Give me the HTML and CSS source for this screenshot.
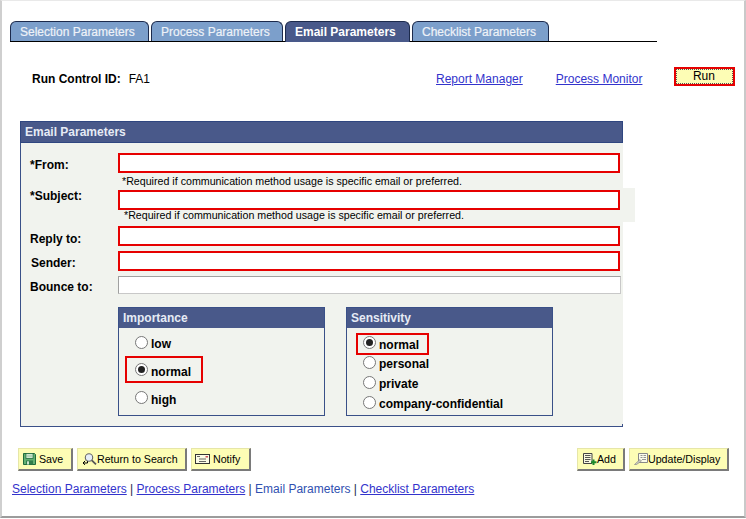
FILE: index.html
```html
<!DOCTYPE html>
<html lang="en">
<head>
<meta charset="utf-8">
<title>Email Parameters</title>
<link rel="stylesheet" href="styles.css">
</head>
<body>
<div class="frame">
  <nav class="tabs">
    <a class="tab tab-1">Selection Parameters</a>
    <a class="tab tab-2">Process Parameters</a>
    <a class="tab tab-3 active">Email Parameters</a>
    <a class="tab tab-4">Checklist Parameters</a>
  </nav>
  <div class="runbar">
    <b class="rc-label">Run Control ID:</b>
    <span class="rc-value">FA1</span>
    <a class="link rm">Report Manager</a>
    <a class="link pm">Process Monitor</a>
    <span class="run-hl"><span class="run">Run</span></span>
  </div>
  <section class="panel">
    <h2 class="panel-head">Email Parameters</h2>
    <div class="panel-body">
      <div class="row row-from"><label class="lab">*From:</label><span class="field hl"></span></div>
      <p class="note">*Required if communication method usage is specific email or preferred.</p>
      <div class="band">
        <div class="row row-subject"><label class="lab">*Subject:</label><span class="field hl"></span></div>
        <p class="note note2">*Required if communication method usage is specific email or preferred.</p>
      </div>
      <div class="row row-reply"><label class="lab">Reply to:</label><span class="field hl"></span></div>
      <div class="row row-sender"><label class="lab">Sender:</label><span class="field hl"></span></div>
      <div class="row row-bounce"><label class="lab">Bounce to:</label><span class="field plain"></span></div>
      <div class="groups">
        <div class="group">
          <h3 class="group-head">Importance</h3>
          <div class="opts opts-imp">
            <div class="opt opt-low"><i class="radio"></i>low</div>
            <div class="opt hlbox"><i class="radio on"></i>normal</div>
            <div class="opt opt-high"><i class="radio"></i>high</div>
          </div>
        </div>
        <div class="group">
          <h3 class="group-head">Sensitivity</h3>
          <div class="opts opts-sen">
            <div class="opt hlbox"><i class="radio on"></i>normal</div>
            <div class="opt"><i class="radio"></i>personal</div>
            <div class="opt"><i class="radio"></i>private</div>
            <div class="opt"><i class="radio"></i>company-confidential</div>
          </div>
        </div>
      </div>
    </div>
  </section>
  <div class="toolbar">
    <span class="btn b-save"><svg class="ico ico-s" viewBox="0 0 13 12"><path d="M.5.500h11l1 1v10H.5z" fill="#62b072" stroke="#1f6a3c"/><rect x="3" y=".5" width="7" height="5" fill="#e4f2e2" stroke="#1f6a3c" stroke-width=".8"/><path d="M4 2.200h5M4 3.800h5" stroke="#7fb98c" stroke-width=".7"/><rect x="3" y="7.500" width="7" height="4" fill="#2f7d4a"/><rect x="4" y="8.300" width="2" height="3.200" fill="#cfe6cf"/></svg><span>Save</span></span>
    <span class="btn b-ret"><svg class="ico ico-r" viewBox="0 0 15 12"><circle cx="7" cy="4.500" r="3.700" fill="#e6eef8" stroke="#666" stroke-width="1.100"/><path d="M9.800 7.300l4.200 4" stroke="#555" stroke-width="1.800"/><path d="M5.500 8.200v1.800H1.200" fill="none" stroke="#000"/><path d="M3.200 7.800L1 10l2.200 2" fill="none" stroke="#000"/></svg><span>Return to Search</span></span>
    <span class="btn b-not"><svg class="ico ico-n" viewBox="0 0 15 10"><rect x=".5" y=".5" width="14" height="9" fill="#fbfbe6" stroke="#333"/><path d="M2 2.500h3M4 5h7M4 7.500h7" stroke="#555" stroke-width=".9"/><rect x="10.500" y="2" width="2.500" height="1.500" fill="#c9505a"/></svg><span>Notify</span></span>
    <span class="spacer"></span>
    <span class="btn b-add"><svg class="ico ico-a" viewBox="0 0 14 12"><path d="M.5.500h8.500v10H.5z" fill="#f8f8df" stroke="#444"/><path d="M2 2.500h5.500M2 4.500h5.500M2 6.500h5.500M2 8.500h4" stroke="#444" stroke-width=".9"/><path d="M10.500 6.500v5.500M8 9.200h5.500" stroke="#1d8a2c" stroke-width="2"/></svg><span>Add</span></span>
    <span class="btn b-upd"><svg class="ico ico-u" viewBox="0 0 14 12"><path d="M4.500.500h9v9h-9z" fill="#fbfbea" stroke="#888"/><path d="M6.500 2.500h2M9.500 2.500h2.500M6.500 4.500h2M9.500 4.500h2.500M8 6.500h4" stroke="#888" stroke-width=".9"/><path d="M.5 11.500l5.500-5 1.500 1.500-5 3.500z" fill="#d0d0c4" stroke="#888" stroke-width=".7"/></svg><span>Update/Display</span></span>
  </div>
  <div class="footer-links">
    <a class="link">Selection Parameters</a> <span class="sep">|</span>
    <a class="link">Process Parameters</a> <span class="sep">|</span>
    <span class="cur">Email Parameters</span> <span class="sep">|</span>
    <a class="link">Checklist Parameters</a>
  </div>
</div>
</body>
</html>
```
FILE: styles.css
```css
* { box-sizing: border-box; }
html, body { margin: 0; padding: 0; background: #fff; }
body { width: 746px; height: 519px; overflow: hidden; font-family: "Liberation Sans", Arial, sans-serif; font-size: 12px; color: #000; }
h2, h3, p { margin: 0; }
.frame { width: 746px; height: 518px; border-style: solid; border-width: 1px 2px 2px 2px; border-color: #e9e9e9 #c9c9c9 #9c9c9c #cfcfcf; padding-top: 20px; }

.tabs { display: flex; height: 21px; width: 647px; margin-left: 8px; border-bottom: 1px solid #000; gap: 2px; }
.tab { height: 20px; padding: 3px 0 0 9px; background: #7c9fcb; color: #eef2f8; font-size: 12px; line-height: 15px; border: 1px solid #1c2a4c; border-bottom: 0; border-radius: 6px 6px 0 0; -webkit-text-stroke: 0.2px #eef2f8; }
.tab-1 { width: 139px; }
.tab-2 { width: 132px; }
.tab-3 { width: 125px; }
.tab-4 { width: 137px; }
.tab.active { background: #49598a; color: #fff; font-weight: bold; height: 21px; -webkit-text-stroke: 0; }

.runbar { display: flex; align-items: center; height: 79px; padding-left: 30px; }
.rc-label { position: relative; top: -3px; }
.rc-value { margin-left: 8px; position: relative; top: -3px; }
.link { color: #3333cc; text-decoration: underline; }
.rm { margin-left: 286px; position: relative; top: -3px; }
.pm { margin-left: 33px; position: relative; top: -3px; }
.run-hl { margin-left: 32px; width: 61px; height: 19px; border: 2px solid #e60000; position: relative; top: -5px; }
.run { display: block; height: 15px; padding-right: 2px; background: #fdfdb5; border: 1px dotted #555; text-align: center; font-size: 12px; line-height: 13px; }

.panel { width: 603px; margin-left: 18px; height: 307px; }
.panel-head { height: 22px; background: #49598a; color: #e6ebf5; font-size: 12px; font-weight: bold; line-height: 20px; padding-left: 4px; border: 1px solid #2f4680; }
.panel-body { position: relative; height: 284px; background: #f1f3ee; border-left: 1px solid #3a5088; border-bottom: 1px solid #3a5088; padding-top: 10px; }
.panel-body::after { content: ""; position: absolute; right: 0; bottom: 0; width: 1px; height: 2px; background: #3a5088; }

.row { display: flex; align-items: flex-start; }
.lab { display: block; width: 97px; padding-left: 9px; font-weight: bold; font-size: 12px; line-height: 15px; }
.field { display: block; width: 502px; height: 20px; background: #fff; }
.hl { border: 2px solid #e60000; }
.plain { width: 503px; height: 18px; border: 1px solid #a5a5a5; border-color: #a0a0a0 #c8c8c8 #c8c8c8 #a0a0a0; }
.note { font-size: 10.67px; line-height: 13px; padding-left: 101px; height: 15px; padding-top: 2px; }
.note2 { padding-left: 103px; padding-top: 0; height: 14px; margin-top: -2px; }
.row-from .lab { padding-top: 5px; }
.band { width: 614px; height: 34px; background: #f1f3ee; padding-top: 2px; }
.row-subject { height: 21px; }
.row-subject .lab { margin-top: -1px; }
.row-reply { margin-top: 4px; height: 20px; }
.row-reply .lab { padding-top: 6px; }
.row-sender { margin-top: 5px; height: 20px; }
.row-sender .lab { padding-top: 5px; padding-left: 10px; }
.row-bounce { margin-top: 5px; height: 18px; }
.row-bounce .lab { padding-top: 4px; }

.groups { display: flex; gap: 21px; margin: 13px 0 0 97px; }
.group { width: 207px; height: 109px; border: 1px solid #3a5088; }
.group-head { height: 20px; background: #49598a; color: #e6ebf5; font-size: 12px; line-height: 20px; padding-left: 4px; }
.opts-imp { padding-left: 6px; }
.opts-sen { padding: 5px 0 0 9px; }
.opt { display: flex; align-items: center; font-weight: bold; font-size: 12px; height: 20px; padding-left: 7px; }
.opts-imp .opt { padding-left: 10px; }
.opts-imp .opt-low { height: 28px; padding-top: 4px; }
.opts-imp .opt-high { height: 28px; margin-top: 1px; padding-top: 3px; }
.opts-imp .hlbox { height: 27px; width: 78px; padding-left: 8px; padding-top: 5px; }
.opts-sen .hlbox { height: 22px; width: 73px; padding-left: 5px; padding-top: 2px; margin-bottom: -1px; }
.hlbox { border: 2px solid #e60000; }
.radio { width: 13px; height: 13px; border-radius: 50%; background: #fff; border: 1px solid #777; margin-right: 3px; flex: none; position: relative; top: -2px; }
.hlbox .radio { top: -3px; }
.radio.on::after { content: ""; display: block; width: 7px; height: 7px; margin: 2px; border-radius: 50%; background: #222; }

.toolbar { display: flex; margin: 20px 0 0 16px; width: 711px; height: 23px; gap: 4px; }
.spacer { flex: 1; }
.btn { display: flex; align-items: center; height: 23px; background: #fdfdb5; font-size: 10.67px; border: 1px solid #e6e6a8; border-right: 2px solid #7a7a7a; border-bottom: 2px solid #7a7a7a; padding-left: 4px; }
.ico { height: 12px; flex: none; }
.ico-s { width: 13px; margin-right: 3px; }
.ico-r { width: 15px; margin-left: 0; }
.ico-n { width: 15px; height: 10px; margin-right: 3px; margin-left: -1px; }
.ico-a { width: 14px; margin-left: 1px; }
.ico-u { width: 14px; margin-left: 0; }
.b-save { width: 55px; }
.b-ret { width: 110px; }
.b-not { width: 60px; }
.b-add { width: 48px; }
.b-upd { width: 100px; }

.footer-links { margin: 11px 0 0 10px; font-size: 12px; line-height: 15px; }
.sep { color: #1c2a4c; }
.cur { color: #3050b0; }
```
